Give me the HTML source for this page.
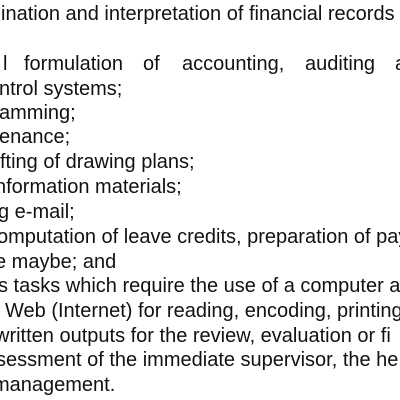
<!DOCTYPE html>
<html><head><style>
html,body{margin:0;padding:0;width:400px;height:400px;overflow:hidden;background:#fff}
.l{position:absolute;white-space:nowrap;font:20px "Liberation Sans",Arial,sans-serif;color:#111;line-height:22px}
</style></head><body>
<div class="l" style="left:1px;top:3px">ination and interpretation of financial records a</div>
<div class="l" style="left:3px;top:53px">l</div>
<div class="l" style="left:24px;top:53px">formulation</div>
<div class="l" style="left:143px;top:53px">of</div>
<div class="l" style="left:182px;top:53px">accounting,</div>
<div class="l" style="left:305px;top:53px">auditing</div>
<div class="l" style="left:395px;top:53px">a</div>
<div class="l" style="left:-1px;top:78px">ntrol systems;</div>
<div class="l" style="left:-1px;top:102px">amming;</div>
<div class="l" style="left:-1px;top:126px">enance;</div>
<div class="l" style="left:0px;top:151px">fting of drawing plans;</div>
<div class="l" style="left:-5px;top:176px">nformation materials;</div>
<div class="l" style="left:-2px;top:201px">g e-mail;</div>
<div class="l" style="left:-3px;top:226px">omputation of leave credits, preparation of pay</div>
<div class="l" style="left:-5px;top:251px">e maybe; and</div>
<div class="l" style="left:-2px;top:275px">s tasks which require the use of a computer a</div>
<div class="l" style="left:5px;top:300px">Web (Internet) for reading, encoding, printing</div>
<div class="l" style="left:-5px;top:325px">written outputs for the review, evaluation or fi</div>
<div class="l" style="left:-4px;top:349px">sessment of the immediate supervisor, the he</div>
<div class="l" style="left:-7px;top:374px">management.</div>
</body></html>
